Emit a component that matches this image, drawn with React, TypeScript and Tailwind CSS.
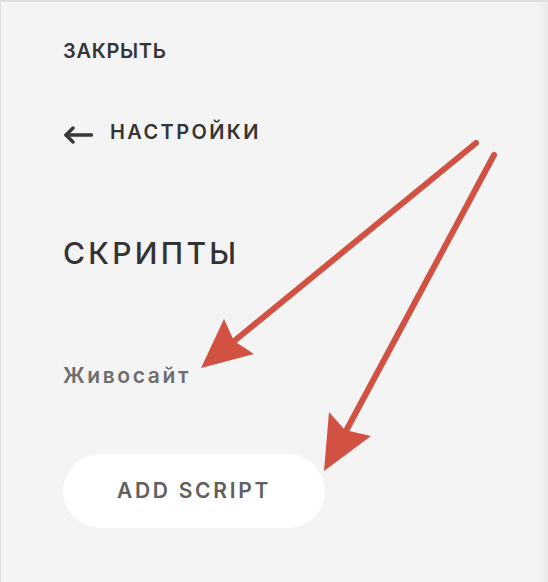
import React from 'react'

const font = { fontFamily: 'Inter, "Open Sans", sans-serif' }

function BackArrow() {
  return (
    <svg width="30" height="18" viewBox="0 0 30 18" fill="none" className="shrink-0 mt-[5px]">
      <path d="M28.5 9H3" stroke="#383838" strokeWidth="3.4" strokeLinecap="round" />
      <path d="M10 2L3 9l7 7" stroke="#383838" strokeWidth="3.4" strokeLinecap="round" strokeLinejoin="round" />
    </svg>
  )
}

// red callout arrows drawn over the panel
function Callouts() {
  const red = '#d15243'
  return (
    <svg className="pointer-events-none absolute inset-0" width="548" height="582" viewBox="0 0 548 582">
      <path d="M475 141L232 340" stroke={red} strokeWidth="6" strokeLinecap="round" />
      <polygon points="200,366 223,317 233,339 253,352" fill={red} />
      <path d="M493 153L345 429" stroke={red} strokeWidth="6" strokeLinecap="round" />
      <polygon points="323,469 328,410 344,428 370,434" fill={red} />
    </svg>
  )
}

export default function App() {
  return (
    <div
      className="relative w-[548px] h-[582px] overflow-hidden bg-[#f4f4f4] border-t-2 border-l border-[#dedede] shadow-[inset_-12px_0_12px_-10px_rgba(0,0,0,0.08)]"
      style={font}
    >
      <div className="flex flex-col items-start pl-[62px]">
        <button className="mt-[37px] text-[20px] leading-6 font-semibold text-[#353535] tracking-[0.7px]">
          ЗАКРЫТЬ
        </button>

        <button className="mt-[57px] flex items-center gap-[17px] text-[20px] leading-6 font-semibold text-[#353535] tracking-[2.4px]">
          <BackArrow />
          НАСТРОЙКИ
        </button>

        <h2 className="mt-[91px] text-[30px] leading-9 font-medium text-[#333333] tracking-[3.3px]">
          СКРИПТЫ
        </h2>

        <div className="mt-[92px] text-[21px] leading-[26px] font-semibold text-[#6e6e6e] tracking-[2.6px]">
          Живосайт
        </div>

        <button className="mt-[65px] w-[262px] h-[74px] rounded-full bg-white text-[21px] font-semibold text-[#606060] tracking-[2.7px]">
          ADD SCRIPT
        </button>
      </div>

      <Callouts />
    </div>
  )
}
